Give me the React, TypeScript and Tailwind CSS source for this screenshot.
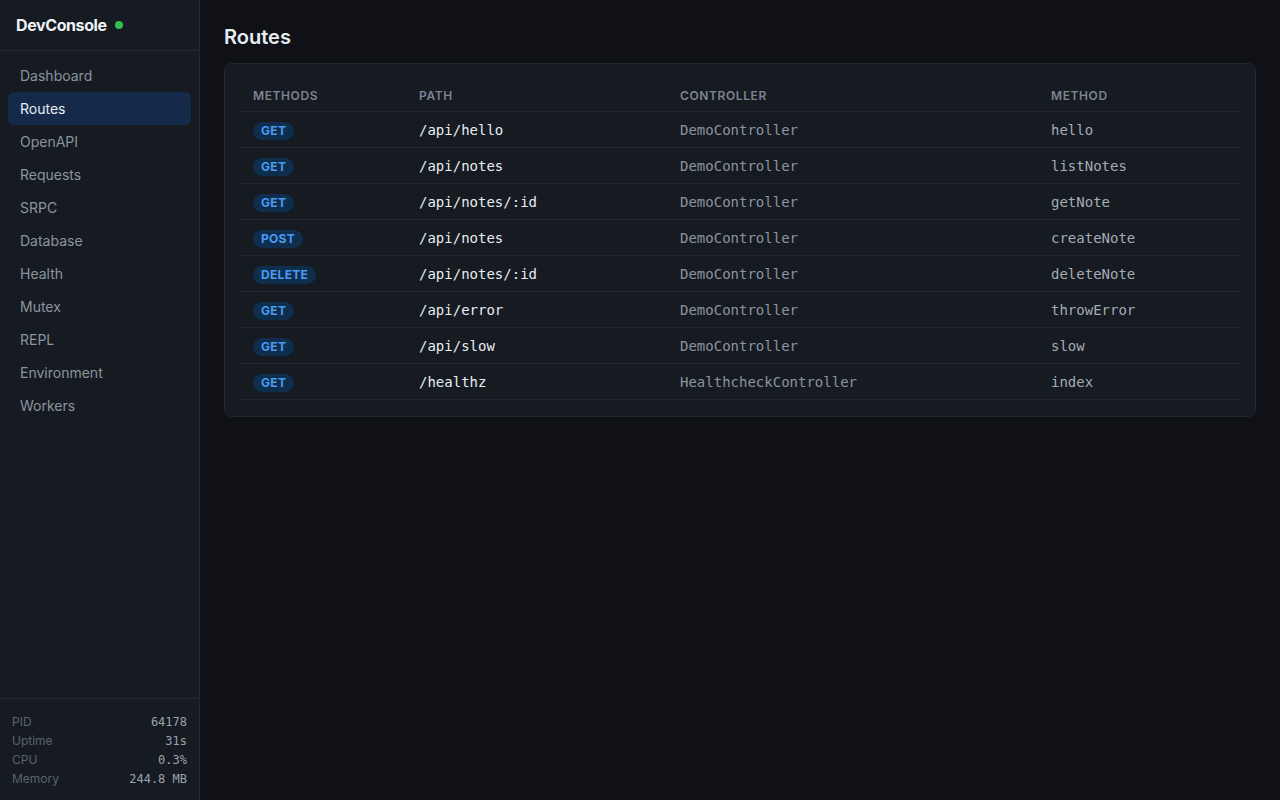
const NAV = [
  "Dashboard",
  "Routes",
  "OpenAPI",
  "Requests",
  "SRPC",
  "Database",
  "Health",
  "Mutex",
  "REPL",
  "Environment",
  "Workers",
];

const ROUTES = [
  { verb: "GET", path: "/api/hello", controller: "DemoController", method: "hello" },
  { verb: "GET", path: "/api/notes", controller: "DemoController", method: "listNotes" },
  { verb: "GET", path: "/api/notes/:id", controller: "DemoController", method: "getNote" },
  { verb: "POST", path: "/api/notes", controller: "DemoController", method: "createNote" },
  { verb: "DELETE", path: "/api/notes/:id", controller: "DemoController", method: "deleteNote" },
  { verb: "GET", path: "/api/error", controller: "DemoController", method: "throwError" },
  { verb: "GET", path: "/api/slow", controller: "DemoController", method: "slow" },
  { verb: "GET", path: "/healthz", controller: "HealthcheckController", method: "index" },
];

const STATS = [
  ["PID", "64178"],
  ["Uptime", "31s"],
  ["CPU", "0.3%"],
  ["Memory", "244.8 MB"],
];

const sans = "font-['Inter','Noto_Sans',sans-serif]";
const mono = "font-['DejaVu_Sans_Mono','Liberation_Mono',monospace]";

function Sidebar({ active }: { active: string }) {
  return (
    <aside className="flex h-screen w-[200px] shrink-0 flex-col border-r border-[#232831] bg-[#161b22]">
      <div className="flex h-[51px] items-center gap-2 border-b border-[#232831] px-4">
        <span className="text-base font-bold tracking-tight text-[#f0f3f6]">DevConsole</span>
        <span className="h-2 w-2 rounded-full bg-[#2fbf4f]" />
      </div>
      <nav className="flex flex-col px-2 pt-2">
        {NAV.map((item) => (
          <a
            key={item}
            className={
              "flex h-[33px] items-center rounded-md px-3 text-sm " +
              (item === active ? "bg-[#152a4a] text-[#e6edf3]" : "text-[#8b949e]")
            }
          >
            {item}
          </a>
        ))}
      </nav>
      <div className="mt-auto border-t border-[#232831] px-3 pb-[12px] pt-[13px]">
        {STATS.map(([label, value]) => (
          <div key={label} className="flex h-[19px] items-center justify-between text-xs">
            <span className="text-[#5b636d]">{label}</span>
            <span className={mono + " text-[#9aa3ad]"}>{value}</span>
          </div>
        ))}
      </div>
    </aside>
  );
}

export default function App() {
  return (
    <div className={sans + " flex h-screen w-full overflow-hidden bg-[#0f1116]"}>
      <Sidebar active="Routes" />
      <main className="flex-1 px-6 pt-[23px]">
        <h1 className="text-xl font-semibold text-[#e6edf3]">Routes</h1>
        <div className="mt-3 rounded-lg border border-[#232831] bg-[#161a21] p-4">
          <table className="w-full table-fixed border-collapse text-left">
            <colgroup>
              <col className="w-[166px]" />
              <col className="w-[261px]" />
              <col className="w-[371px]" />
              <col />
            </colgroup>
            <thead>
              <tr className="border-b border-[#232831]">
                {["Methods", "Path", "Controller", "Method"].map((h) => (
                  <th
                    key={h}
                    className="h-[31px] px-3 pt-[2px] align-middle text-xs font-semibold uppercase tracking-wider text-[#7d8590]"
                  >
                    {h}
                  </th>
                ))}
              </tr>
            </thead>
            <tbody>
              {ROUTES.map((r, i) => (
                <tr key={i} className="h-9 border-b border-[#232831]">
                  <td className="px-3 pt-1 align-middle">
                    <span className="flex h-[18px] w-fit items-center rounded-full bg-[#0f2d4d] px-2 text-xs font-bold tracking-wide text-[#4a9cf0]">
                      {r.verb}
                    </span>
                  </td>
                  <td className={mono + " px-3 pt-[2px] text-sm text-[#e6edf3]"}>{r.path}</td>
                  <td className={mono + " px-3 pt-[2px] text-sm text-[#8b949e]"}>{r.controller}</td>
                  <td className={mono + " px-3 pt-[2px] text-sm text-[#a3abb5]"}>{r.method}</td>
                </tr>
              ))}
            </tbody>
          </table>
        </div>
      </main>
    </div>
  );
}
